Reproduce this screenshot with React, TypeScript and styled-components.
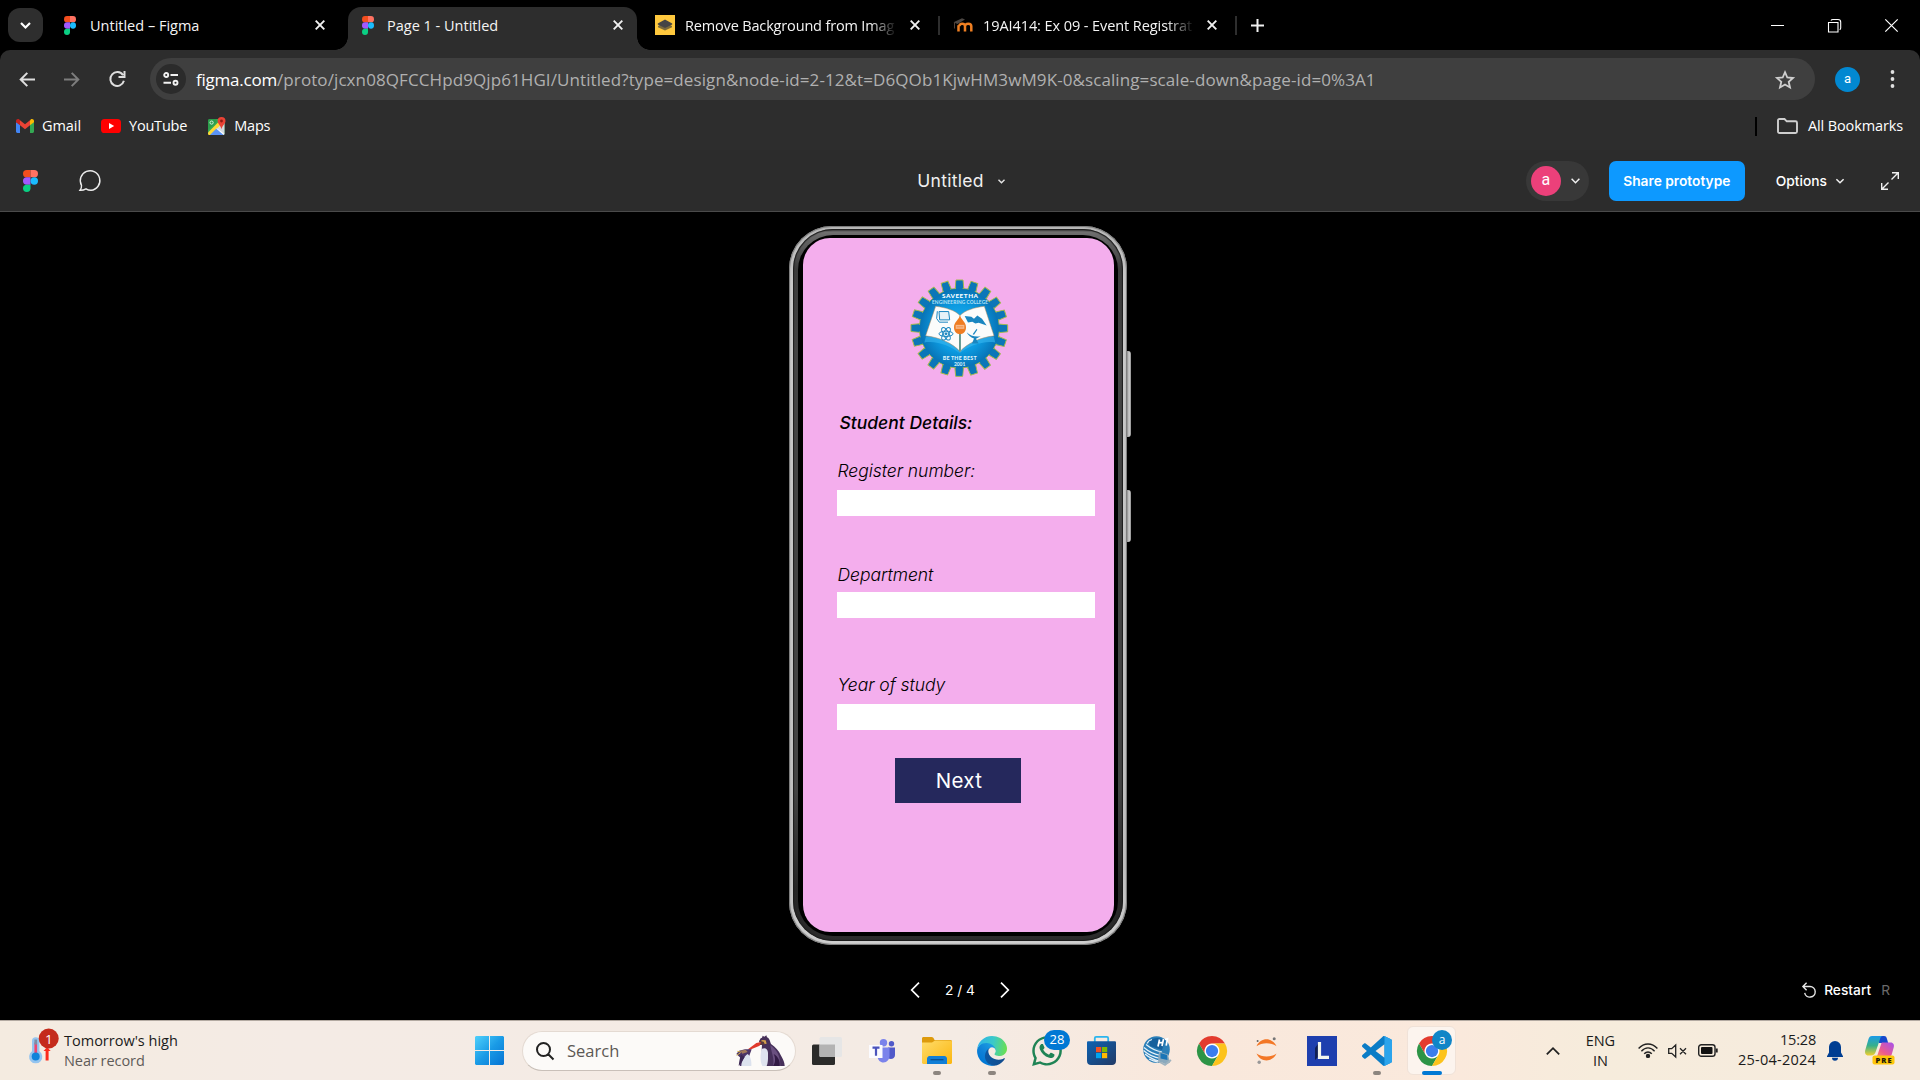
import React from "react";
import styled, { createGlobalStyle } from "styled-components";
import { FaWhatsapp } from "react-icons/fa";

const ui = `"Open Sans", "Noto Sans", sans-serif`;
const inter = `Inter, "Liberation Sans", sans-serif`;

const Global = createGlobalStyle`
  * { box-sizing: border-box; }
  body { margin: 0; background: #000; overflow: hidden; }
  svg { display: block; flex: none; overflow: visible; }
`;

const Window = styled.div`
  width: 1920px;
  height: 1080px;
  display: flex;
  flex-direction: column;
  background: #000;
  font-family: ${ui};
  color: #fff;
`;

/* ---------- Tab strip ---------- */

const TabStrip = styled.div`
  height: 50px;
  flex: none;
  display: flex;
  align-items: center;
  padding-left: 8px;
`;

const TabSearch = styled.div`
  width: 35px;
  height: 34px;
  border-radius: 12px;
  background: #2e2e2e;
  display: flex;
  align-items: center;
  justify-content: center;
  margin-right: 9px;
`;

const Tab = styled.div<{ $width: number; $start: number; $end: number; $gap: number }>`
  width: ${(p) => p.$width}px;
  height: 36px;
  display: flex;
  align-items: center;
  justify-content: space-between;
  gap: ${(p) => p.$gap}px;
  padding: 0 ${(p) => p.$end}px 0 ${(p) => p.$start}px;
`;

const ActiveTab = styled(Tab)`
  position: relative;
  align-self: flex-end;
  height: 43px;
  padding-bottom: 7px;
  background: #2d2d2d;
  border-radius: 13px 13px 0 0;
  &::before,
  &::after {
    content: "";
    position: absolute;
    bottom: 0;
    width: 13px;
    height: 13px;
  }
  &::before {
    left: -13px;
    background: radial-gradient(circle at 0 0, transparent 12.5px, #2d2d2d 13px);
  }
  &::after {
    right: -13px;
    background: radial-gradient(circle at 100% 0, transparent 12.5px, #2d2d2d 13px);
  }
`;

const TabTitle = styled.span<{ $spacing?: number; $fade?: boolean }>`
  flex: 1;
  overflow: hidden;
  white-space: nowrap;
  font-size: 14.5px;
  line-height: 22px;
  padding-top: 1px;
  letter-spacing: ${(p) => p.$spacing ?? 0}px;
  color: #f4f4f4;
  margin-right: ${(p) => (p.$fade ? 5 : 0)}px;
  ${(p) => p.$fade && "mask-image: linear-gradient(to right, #000 88%, transparent 101%);"}
`;

const TabDivider = styled.div`
  width: 2px;
  height: 19px;
  background: #2e2e2e;
`;

const NewTab = styled.div`
  margin-left: 14px;
`;

const WindowButtons = styled.div`
  margin-left: auto;
  display: flex;
  align-items: center;
  gap: 44px;
  padding-right: 22px;
`;

/* ---------- Navigation and bookmarks ---------- */

const ChromeBars = styled.div`
  height: 100px;
  flex: none;
  background: #2d2d2d;
  border-radius: 10px 10px 0 0;
`;

const NavBar = styled.div`
  height: 58px;
  display: flex;
  align-items: center;
  padding-left: 19px;
`;

const NavButtons = styled.div`
  display: flex;
  align-items: center;
  gap: 29px;
  width: 131px;
`;

const AddressBar = styled.div`
  width: 1665px;
  height: 42px;
  border-radius: 21px;
  background: #3f3f3f;
  display: flex;
  align-items: center;
  padding: 0 20px 0 6px;
`;

const SiteInfo = styled.div`
  width: 30px;
  height: 30px;
  border-radius: 50%;
  background: #2b2b2b;
  display: flex;
  align-items: center;
  justify-content: center;
`;

const Url = styled.div`
  flex: 1;
  margin-left: 10px;
  padding-top: 1px;
  font-size: 17px;
  line-height: 26px;
  letter-spacing: 0.092px;
  color: #b0b0b0;
  white-space: nowrap;
`;

const Host = styled.span`
  color: #fff;
  letter-spacing: -0.22px;
`;

const Avatar = styled.div<{ $size: number; $color: string; $font: number }>`
  width: ${(p) => p.$size}px;
  height: ${(p) => p.$size}px;
  border-radius: 50%;
  background: ${(p) => p.$color};
  display: flex;
  align-items: center;
  justify-content: center;
  font-family: Roboto, ${ui};
  font-size: ${(p) => p.$font}px;
  line-height: 1;
  color: #fff;
  padding-bottom: 2px;
`;

const ProfileArea = styled.div`
  display: flex;
  align-items: center;
  gap: 30px;
  margin-left: 20px;
`;

const BookmarkBar = styled.div`
  height: 36px;
  display: flex;
  align-items: center;
  padding: 0 17px 0 16px;
`;

const Bookmark = styled.div<{ $gap: number; $after?: number; $spacing?: number }>`
  display: flex;
  align-items: center;
  gap: ${(p) => p.$gap}px;
  margin-right: ${(p) => p.$after ?? 0}px;
  font-size: 14.5px;
  line-height: 22px;
  letter-spacing: ${(p) => p.$spacing ?? -0.2}px;
  color: #fff;
  white-space: nowrap;
`;

const BookmarkDivider = styled.div`
  width: 2px;
  height: 19px;
  background: #000;
  margin: 0 20px 0 auto;
`;

/* ---------- Prototype toolbar ---------- */

const ProtoBar = styled.div`
  height: 62px;
  flex: none;
  display: grid;
  grid-template-columns: 1fr auto 1fr;
  align-items: center;
  background: #2c2c2c;
  border-bottom: 1px solid #4a4a4a;
  font-family: ${inter};
`;

const BarStart = styled.div`
  display: flex;
  align-items: center;
  gap: 41px;
  padding-left: 23px;
`;

const FileName = styled.div`
  display: flex;
  align-items: center;
  gap: 14px;
  padding: 1px 0 0 2px;
  font-size: 17.5px;
  letter-spacing: 0.3px;
  line-height: 24px;
  color: #f0f0f0;
`;

const BarEnd = styled.div`
  display: flex;
  align-items: center;
  justify-content: flex-end;
  padding-right: 21px;
`;

const ViewerPill = styled.div`
  width: 63px;
  height: 40px;
  border-radius: 20px;
  background: #383838;
  display: flex;
  align-items: center;
  gap: 10px;
  padding-left: 5px;
`;

const ShareButton = styled.div`
  width: 136px;
  height: 40px;
  margin-left: 20px;
  border-radius: 7px;
  background: #0d99ff;
  display: flex;
  align-items: center;
  justify-content: center;
  font-size: 13.75px;
  font-weight: 600;
  color: #fff;
`;

const OptionsButton = styled.div`
  display: flex;
  align-items: center;
  gap: 9px;
  margin: 0 37px 0 31px;
  font-size: 13.75px;
  font-weight: 500;
  color: #fff;
`;

/* ---------- Stage and phone ---------- */

const Stage = styled.main`
  height: 808px;
  flex: none;
  display: flex;
  flex-direction: column;
  background: #000;
  font-family: ${inter};
`;

const PhoneArea = styled.div`
  height: 733px;
  display: flex;
  padding: 14px 0 0 789px;
`;

const Phone = styled.div`
  width: 338px;
  height: 719px;
  border-radius: 43px;
  padding: 2.5px 4px 4px;
  background: linear-gradient(180deg, #b9b9b9 0, #c9c9c9 60px, #bfbfbf 640px, #cfcfcf 719px);
  box-shadow: inset 0 0 1px 1px #777;
`;

const Bezel = styled.div`
  height: 100%;
  border-radius: 40px;
  padding: 6px 5px 5px;
  background: linear-gradient(180deg, #2a2a2a 0, #707070 3px, #6a6a6a 6px, #3b3b3b 40px, #444 120px, #444 560px, #262626 660px, #2c2c2c 100%);
  box-shadow: inset 0 0 1px 1px #1c1c1c;
`;

const Glass = styled.div`
  height: 100%;
  border-radius: 35px;
  padding: 3.5px 4.5px;
  background: #000;
`;

const Keys = styled.div`
  width: 4px;
  display: flex;
  flex-direction: column;
  gap: 53px;
  padding-top: 125px;
`;

const Key = styled.div<{ $height: number }>`
  width: 3.5px;
  height: ${(p) => p.$height}px;
  border-radius: 0 3px 3px 0;
  background: linear-gradient(90deg, #8a8a8a, #d4d4d4 55%, #8c8c8c);
`;

const Screen = styled.div`
  height: 694px;
  border-radius: 27px;
  background: #f4aeed;
  color: #000;
  padding: 42px 19px 0 34px;
  display: flex;
  flex-direction: column;
  align-items: flex-start;
`;

const Crest = styled.div`
  width: 98px;
  height: 96px;
  margin-left: 73px;
`;

const Heading = styled.div`
  margin: 35px 0 0 3px;
  font-size: 17.5px;
  line-height: 24px;
  font-weight: 500;
  font-style: italic;
`;

const FieldLabel = styled.label<{ $top: number; $bottom: number }>`
  margin: ${(p) => p.$top}px 0 ${(p) => p.$bottom}px 1px;
  font-size: 17.5px;
  line-height: 24px;
  font-weight: 300;
  font-style: italic;
  letter-spacing: -0.04px;
  white-space: nowrap;
`;

const Field = styled.div`
  width: 258px;
  height: 26px;
  background: #fff;
`;

const NextButton = styled.div`
  width: 126px;
  height: 45px;
  margin: 28px 0 0 58px;
  background: #25285c;
  display: flex;
  align-items: center;
  justify-content: center;
  padding-left: 3px;
  font-size: 20.5px;
  font-weight: 400;
  letter-spacing: 0.3px;
  color: #fff;
`;

const PagerRow = styled.div`
  flex: 1;
  display: grid;
  grid-template-columns: 1fr auto 1fr;
  align-items: center;
  padding-top: 14px;
  font-size: 13.75px;
`;

const Pager = styled.div`
  grid-column: 2;
  display: flex;
  align-items: center;
  gap: 25px;
`;

const Restart = styled.div`
  display: flex;
  align-items: center;
  justify-content: flex-end;
  gap: 8px;
  padding-right: 30px;
  font-weight: 500;
`;

const Shortcut = styled.span`
  color: #6a6a6a;
  font-weight: 400;
  margin-left: 2px;
`;

/* ---------- Taskbar ---------- */

const Taskbar = styled.footer`
  height: 60px;
  flex: none;
  display: flex;
  align-items: center;
  border-top: 1px solid #b3aaa2;
  background: linear-gradient(90deg, #f4ebe0 0, #f4ebe5 15%, #f4ebe4 50%, #f9e8dc 62%, #fae9dc 76%, #f6ecdc 83%, #f6ebde 100%);
  color: #1b1b1b;
  font-size: 14.5px;
`;

const Weather = styled.div`
  width: 475px;
  display: flex;
  align-items: center;
  padding-left: 28px;
`;

const WeatherIcon = styled.div`
  width: 36px;
  height: 38px;
`;

const TwoLines = styled.div<{ $align: string }>`
  display: flex;
  flex-direction: column;
  text-align: ${(p) => p.$align};
  line-height: 20px;
  white-space: nowrap;
`;

const Line = styled.span<{ $spacing?: number; $muted?: boolean }>`
  letter-spacing: ${(p) => p.$spacing ?? 0}px;
  color: ${(p) => (p.$muted ? "#5f5b58" : "#1b1b1b")};
`;

const SearchPill = styled.div`
  width: 274px;
  height: 40px;
  margin: 0 3px 0 18px;
  border-radius: 20px;
  background: #fcfaf8;
  border: 1px solid #e4dad2;
  border-bottom-color: #c9c0b9;
  display: flex;
  align-items: center;
  padding: 0 10px 0 13px;
  font-size: 16.5px;
  color: #5c5854;
`;

const SearchText = styled.span`
  flex: 1;
  margin-left: 13px;
`;

const Slot = styled.div`
  position: relative;
  width: 55px;
  height: 50px;
  display: flex;
  align-items: center;
  justify-content: center;
`;

const SlotCard = styled.div`
  width: 49px;
  height: 49px;
  border-radius: 6px;
  background: #fcf4ee;
  border: 1px solid #f0e2d8;
  display: flex;
  align-items: center;
  justify-content: center;
`;

const Running = styled.span<{ $active?: boolean }>`
  position: absolute;
  bottom: 1px;
  left: 50%;
  width: ${(p) => (p.$active ? 20 : 8)}px;
  height: 4px;
  margin-left: ${(p) => (p.$active ? -10 : -4)}px;
  border-radius: 2px;
  background: ${(p) => (p.$active ? "#0078d4" : "#8c857f")};
`;

const SlotBadge = styled.span<{ $width: number; $color: string; $font: number }>`
  position: absolute;
  top: 4px;
  left: ${(p) => (p.$width > 20 ? 25 : 28)}px;
  width: ${(p) => p.$width}px;
  height: 20px;
  border-radius: 10px;
  background: ${(p) => p.$color};
  color: #fff;
  font-size: ${(p) => p.$font}px;
  line-height: 19px;
  text-align: center;
`;

const Letter = styled.div`
  width: 30px;
  height: 30px;
  background: #1e3fae;
  display: flex;
  align-items: center;
  justify-content: center;
`;

const Tray = styled.div`
  margin-left: auto;
  display: flex;
  align-items: center;
  padding-right: 25px;
`;

const TrayItem = styled.div<{ $before: number; $up?: number }>`
  margin-left: ${(p) => p.$before}px;
  padding-bottom: ${(p) => p.$up ?? 0}px;
`;

/* ---------- Icons ---------- */

const FigmaMark = ({ w, h }: { w: number; h: number }) => (
  <svg width={w} height={h} viewBox="0 0 20 30" preserveAspectRatio="none">
    <path d="M5 0h5v10H5A5 5 0 0 1 5 0z" fill="#f24e1e" />
    <path d="M10 0h5a5 5 0 0 1 0 10h-5z" fill="#ff7262" />
    <path d="M5 10h5v10H5a5 5 0 0 1 0-10z" fill="#a259ff" />
    <circle cx="15" cy="15" r="5" fill="#1abcfe" />
    <path d="M5 20h5v5a5 5 0 1 1-5-5z" fill="#0acf83" />
  </svg>
);

const Stroke = ({ d, w, h, c = "#e6e6e6", s = 1.5 }: { d: string; w: number; h: number; c?: string; s?: number }) => (
  <svg width={w} height={h} viewBox={`0 0 ${w} ${h}`} fill="none" stroke={c} strokeWidth={s}>
    <path d={d} />
  </svg>
);

const Cross = () => <Stroke w={10} h={10} d="M.7.7l8.6 8.6M9.3.7L.7 9.3" s={1.9} c="#f1f1f1" />;

const Layers = () => (
  <svg width="20" height="20" viewBox="0 0 20 20">
    <path d="M0 0h20v20H0z" fill="#ffc83d" />
    <path d="M3 11l7-3.6 7 3.6v1.2l-7 3.4-7-3.4z" fill="#7b6a3b" />
    <path d="M10 4.6l7.2 3.8v1L10 13 2.8 9.4v-1z" fill="#454545" />
  </svg>
);

const Moodle = () => (
  <svg width="20" height="16" viewBox="0 0 20 16" fill="none">
    <path d="M5.500 14.500V8.200M12 14.500V9.200c0-3.400-5.400-3.400-5.700 0M18.300 14.500V9.200c0-3.400-6-3.400-6.300 0v5.300" stroke="#ef7f22" strokeWidth="2.500" />
    <path d="M.5 5.200L9 1.200l3 1.400-7.500 4.300z" fill="#4b4643" />
    <path d="M1.500 5.500v6" stroke="#5b4a3e" strokeWidth=".9" />
  </svg>
);

const Gmail = () => (
  <svg width="18" height="14" viewBox="0 0 18 14">
    <path d="M0 3v9.6C0 13.400.6 14 1.300 14H4V5.600z" fill="#4285f4" />
    <path d="M14 5.600V14h2.700c.7 0 1.300-.6 1.300-1.400V3z" fill="#34a853" />
    <path d="M14 1.600v4.700l4-3V2c0-1.900-2.100-2.500-3.300-1.500z" fill="#fbbc04" />
    <path d="M4 6.300V1.300l5 3.900 5-3.900v5L9 10.200z" fill="#ea4335" />
    <path d="M0 2v1.300l4 3V1.300L3.300.500C2-.5 0 .2 0 2z" fill="#c5221f" />
  </svg>
);

const YouTube = () => (
  <svg width="20" height="14" viewBox="0 0 20 14">
    <rect width="20" height="14" rx="3.600" fill="#f00" />
    <path d="M8 4l5.200 3L8 10z" fill="#fff" />
  </svg>
);

const Maps = () => (
  <svg width="18" height="18" viewBox="0 0 18 18">
    <rect x="0" y="2" width="16.500" height="16" rx="2" fill="#34a853" />
    <path d="M7 10.500l9.500 7V6L12 4z" fill="#d5dade" />
    <path d="M1.500 18L9 10.800 16 18z" fill="#4285f4" />
    <path d="M0 15.500L10.500 5l2.600 2.600L2.500 18H1.200C.4 18 0 17.300 0 16.500z" fill="#fdd835" />
    <path d="M2 18l6.500-6.500L15 18z" fill="#5b93f5" />
    <path d="M0 4v9L8.500 5V2H2C.8 2 0 2.800 0 4z" fill="#2c9d4b" />
    <path d="M9 11l-.6.700L15.500 18l1-1z" fill="#fff" />
    <circle cx="3.600" cy="5.600" r="1.600" fill="none" stroke="#e8f5e9" strokeWidth=".9" />
    <path d="M13.500 0A4 4 0 0 0 9.600 4c0 3 3.200 4.200 3.900 8.300.7-4.100 4-5.300 4-8.300a4 4 0 0 0-4-4z" fill="#ea4335" />
    <circle cx="13.500" cy="4" r="1.400" fill="#8e1c14" />
  </svg>
);

const teeth = Array.from({ length: 20 }, (_, i) => i * 18);

const CollegeCrest = () => (
  <svg width="98" height="96" viewBox="30 29 294 289" preserveAspectRatio="none">
    <defs>
      <radialGradient id="disc">
        <stop offset="0" stopColor="#27b4f0" />
        <stop offset=".6" stopColor="#0c9ae0" />
        <stop offset="1" stopColor="#0873b6" />
      </radialGradient>
    </defs>
    <g stroke="#a3b94c" strokeWidth="3">
      {teeth.map((a) => (
        <path key={a} d="M165 62l3-33h21l3 33z" fill="#0b76b8" transform={`rotate(${a} 178 174)`} />
      ))}
      <circle cx="178" cy="174" r="120" fill="#0b76b8" />
    </g>
    {teeth.map((a) => (
      <path key={a} d="M167.500 66l2-34h17l2 34z" fill="#0b76b8" transform={`rotate(${a} 178 174)`} />
    ))}
    <circle cx="178" cy="174" r="118.500" fill="url(#disc)" />
    <path d="M73 217l5-18c40-5 78 18 101 48 23-30 62-53 102-48l5 18c-40-6-80 12-107 32-27-20-66-38-106-32z" fill="#38b7f0" opacity=".6" />
    <g fill="#fbfcfb" stroke="#b98a5c" strokeWidth="1.500">
      <path d="M107 108c30 4 58 12 73 28v108c-22-24-60-42-103-47z" />
      <path d="M253 108c-30 4-58 12-73 28v108c22-24 60-42 102-47z" />
    </g>
    <path d="M180 190v52" stroke="#2a7d78" strokeWidth="4" />
    <path d="M180 136c3 12 18 20 18 35 0 28-36 28-36 0 0-15 15-23 18-35z" fill="#ef7d22" />
    <path d="M167 164h26v12h-26z" fill="#f7b98b" />
    <path d="M170 170h20" stroke="#ef7d22" strokeWidth="2" />
    <g fill="none" stroke="#1a86c0" strokeWidth="3">
      <path d="M117 124h29l3 25h-30z" fill="#e6f2f8" />
      <path d="M112 123l-2 22 8 11h26" />
      <ellipse cx="138" cy="191" rx="21" ry="8" />
      <ellipse cx="138" cy="191" rx="21" ry="8" transform="rotate(60 138 191)" />
      <ellipse cx="138" cy="191" rx="21" ry="8" transform="rotate(120 138 191)" />
      <circle cx="138" cy="191" r="3" fill="#1a86c0" />
    </g>
    <g fill="#1a86c0">
      <path d="M194 137l20 3 8 6 10-10 14 10 14 20-24-8-10 2-9-5-13 2z" />
      <path d="M200 186c10 10 26 16 42 12l-14 8 8 14h-20l6-15c-10-4-18-10-22-19z" />
      <path d="M218 192l12-16 2 3-10 15z" />
    </g>
    <g fill="#fff" fontFamily="Lato, sans-serif" textAnchor="middle">
      <text x="180" y="82" fontSize="19" fontWeight="900" textLength="108">SAVEETHA</text>
      <text x="180" y="102" fontSize="14.500" fontWeight="700" fill="#b5e3f8" textLength="168">ENGINEERING COLLEGE</text>
      <text x="179" y="271" fontSize="16" fontWeight="900" fill="#dff3fc" textLength="102">BE THE BEST</text>
      <text x="179" y="289" fontSize="15" fontWeight="900" fill="#c9ebfa" textLength="34">2001</text>
    </g>
  </svg>
);

const Thermometer = () => (
  <svg width="36" height="38" viewBox="0 3.500 36 38">
    <path d="M4 12.500a3.700 3.700 0 0 1 7.400 0v10.300a6.600 6.600 0 1 1-7.400 0z" fill="#94c4ef" />
    <path d="M6.400 14h2.700v14H6.400z" fill="#f0456e" />
    <path d="M6.400 11h2.700v5H6.400z" fill="#7c8ea6" />
    <circle cx="7.700" cy="28" r="4" fill="#1083da" />
    <path d="M17.600 20h3v12h-3z" fill="#fb2a1c" />
    <path d="M15.500 22.500l3.600-3.500 3.600 3.500z" fill="#fb2a1c" />
    <circle cx="20.700" cy="10" r="10" fill="#c42b1c" />
    <text x="20.900" y="15" fontSize="13.500" fill="#fff" textAnchor="middle" fontFamily="Open Sans, sans-serif">1</text>
  </svg>
);

const WindowsLogo = () => (
  <svg width="29" height="29" viewBox="0 0 29 29">
    <defs>
      <linearGradient id="win" x1="0" y1="0" x2="29" y2="29" gradientUnits="userSpaceOnUse">
        <stop offset="0" stopColor="#4fd0fb" />
        <stop offset=".5" stopColor="#1a9be6" />
        <stop offset="1" stopColor="#0673d3" />
      </linearGradient>
    </defs>
    <path d="M1 0h13v14H0V1zM15 0h13l1 1v13H15zM0 15h14v14H1l-1-1zM15 15h14v13l-1 1H15z" fill="url(#win)" />
  </svg>
);

const Penguins = () => (
  <svg width="49" height="32" viewBox="827 77 147 96">
    <path d="M896 96l5-9 4-2 2-6 5 3 6-4 2 6c9 4 9 14 12 20 14 10 24 20 29 33 8 14 12 22 12 33h-62c-6-8-2-20-5-28-2-14-2-24-1-34z" fill="#46305a" />
    <path d="M930 108c18 12 30 30 30 62h-22c6-20-6-44-8-62z" fill="#6a5080" />
    <path d="M905 118c10-4 17 0 18 12 0 14 1 28-4 40h-13c-8-16-6-38-1-52z" fill="#dfe3ef" />
    <path d="M940 134c14 8 20 22 18 36h-20c8-10 8-24 2-36z" fill="#321b45" />
    <path d="M897 95l14-4 8 6-6 9-14 1z" fill="#5a3a3c" />
    <path d="M904 92l12 1 3 10-6 1-3-7-7-1z" fill="#d3a04d" />
    <path d="M902 98l-4 11-33 14-1-4 24-18z" fill="#e0392c" />
    <path d="M828 134l8-10 18-4 20 0-6 16-6 17-14 17h-10l3-24z" fill="#4c3567" />
    <path d="M840 124l16-3 6 7-16 5z" fill="#a37a5a" />
    <path d="M829 138l12-8M831 126l10 2" stroke="#d7b24d" strokeWidth="3" />
    <path d="M862 134c9 8 12 22 11 36h-30c0-14 8-28 19-36z" fill="#dce2ee" />
    <path d="M842 136c-4 10-5 20-7 33 8-6 12-16 18-26z" fill="#3b2753" />
  </svg>
);

const TaskView = () => (
  <svg width="30" height="28" viewBox="0 0 30 28">
    <rect x="0" y="7.500" width="23" height="20.500" rx="1.500" fill="#2b2b2a" />
    <rect x="7.500" y="0" width="22.500" height="20" rx="1.500" fill="#e6e6e6" />
    <path d="M7.500 7.500H23V20H8.500a1 1 0 0 1-1-1z" fill="#b3b3b3" />
  </svg>
);

const Teams = () => (
  <svg width="26" height="24" viewBox="0 0 26 24">
    <circle cx="14.500" cy="3.700" r="3.700" fill="#7b83eb" />
    <circle cx="22.500" cy="4.700" r="2.700" fill="#5059c9" />
    <path d="M19 8.500h7v7.500c0 3.600-4 5-7 3.200z" fill="#5059c9" />
    <path d="M9 8.500h11.500v8c0 4-2.600 7-6 7S9 21 8.600 18z" fill="#7b83eb" />
    <path d="M0 6h13.500v13H0z" fill="#fbfbff" />
    <path d="M3.500 8.700h7M7 8.700v8" stroke="#4b53bc" strokeWidth="2.200" fill="none" />
  </svg>
);

const Explorer = () => (
  <svg width="30" height="27" viewBox="0 0 30 27">
    <defs>
      <linearGradient id="folder" x1="0" y1="0" x2="1" y2="1">
        <stop offset="0" stopColor="#ffdc6a" />
        <stop offset="1" stopColor="#fbb60f" />
      </linearGradient>
    </defs>
    <path d="M0 1.500C0 .6.600 0 1.500 0h8c1.600 0 2.300 1.300 3 3H29l1 1v3H0z" fill="#dd9a0c" />
    <path d="M0 5.500h10l3-2h16l1 1V26l-1 1H1l-1-1z" fill="url(#folder)" />
    <path d="M5 27v-5c0-1.600 1-3 2.600-3h14.800c1.600 0 2.600 1.400 2.600 3v5z" fill="#117ed6" />
    <path d="M8.500 22.700h13" stroke="#0b4f8f" strokeWidth="1.300" />
  </svg>
);

const Edge = () => (
  <svg width="30" height="30" viewBox="0 0 256 256">
    <defs>
      <linearGradient id="e1" x1="60" y1="177" x2="241" y2="177" gradientUnits="userSpaceOnUse">
        <stop offset="0" stopColor="#0c59a4" />
        <stop offset="1" stopColor="#114a8b" />
      </linearGradient>
      <linearGradient id="e2" x1="157" y1="100" x2="46" y2="221" gradientUnits="userSpaceOnUse">
        <stop offset="0" stopColor="#1b9de2" />
        <stop offset=".6" stopColor="#0f80d7" />
        <stop offset="1" stopColor="#0078d4" />
      </linearGradient>
      <linearGradient id="e3" x1="10" y1="60" x2="256" y2="110" gradientUnits="userSpaceOnUse">
        <stop offset="0" stopColor="#2fb5e8" />
        <stop offset=".5" stopColor="#3bc9c8" />
        <stop offset="1" stopColor="#6ce04e" />
      </linearGradient>
    </defs>
    <path fill="url(#e1)" d="M231.100 190.500c-3.400 1.800-6.900 3.400-10.500 4.700a101.500 101.500 0 0 1-35.800 6.400c-47.200 0-88.300-32.500-88.300-74.100a31.500 31.500 0 0 1 16.400-27.300c-42.700 1.800-53.700 46.300-53.700 72.400 0 73.900 68.100 81.400 82.800 81.400 7.900 0 19.800-2.300 27-4.600l1.300-.4a128.300 128.300 0 0 0 66.600-52.800 4 4 0 0 0-5.800-5.700z" />
    <path fill="url(#e2)" d="M105.700 241.400a79.200 79.200 0 0 1-22.700-21.300 80.700 80.700 0 0 1 29.900-120c3.100-1.500 8.500-4.100 15.600-4a32.400 32.400 0 0 1 25.700 13 31.900 31.900 0 0 1 6.300 18.700c0-.2 24.500-79.600-80-79.600-43.900 0-80 41.600-80 78.200 0 23.300 5.400 39.200 12.100 54.500a128 128 0 0 0 156.400 67 75.500 75.500 0 0 1-62.800-8z" />
    <path fill="url(#e3)" d="M152.300 148.900c-.8 1-3.300 2.500-3.300 5.700 0 2.600 1.700 5.100 4.700 7.300 14.400 10 41.500 8.700 41.500 8.700a59.600 59.600 0 0 0 30.300-8.400 61.400 61.400 0 0 0 30.500-53c.3-22.400-8-37.300-11.300-43.900C223.600 23.900 177.700 0 128 0A128 128 0 0 0 0 126.200c.5-36.500 36.800-66 80-66 3.500 0 23.500.3 42 10.100 16.300 8.600 24.900 18.900 30.800 29.200 6.200 10.700 7.300 24.100 7.300 29.500s-2.700 13.300-7.800 19.900z" />
  </svg>
);

const Store = () => (
  <svg width="29" height="29" viewBox="0 0 29 29">
    <defs>
      <linearGradient id="bag" x1="0" y1="0" x2="1" y2="1">
        <stop offset="0" stopColor="#0c62b2" />
        <stop offset="1" stopColor="#223a66" />
      </linearGradient>
    </defs>
    <path d="M7.800 6V2.200c0-.8.500-1.300 1.300-1.300h10.800c.8 0 1.300.5 1.300 1.300V6" fill="none" stroke="#2bb5ee" strokeWidth="1.800" />
    <path d="M0 6.500c0-.8.500-1.300 1.300-1.300h26.400c.8 0 1.300.5 1.300 1.300V25c0 2.400-1.600 4-4 4H4c-2.400 0-4-1.600-4-4z" fill="url(#bag)" />
    <path d="M9 11h5.200v5.200H9z" fill="#f25022" />
    <path d="M15 11h5.200v5.200H15z" fill="#7fba00" />
    <path d="M9 17h5.200v5.200H9z" fill="#00a4ef" />
    <path d="M15 17h5.200v5.200H15z" fill="#ffb900" />
  </svg>
);

const Globe = () => (
  <svg width="28" height="29" viewBox="0 0 28 29">
    <circle cx="13.500" cy="13.500" r="13.300" fill="#2b7fb8" />
    <path d="M6 5C11 1 18 1 22 5l-3 9-12-4z" fill="#15609c" />
    <g fill="none" stroke="#e9f3f9" strokeWidth="1.200">
      <path d="M3 8.500c5 4 10 6.500 16 7.500M1 11.500c5 4.500 11 7 17 8M.6 14.500c5 4.500 10 7 17 8M2 18c4 3.500 8 5.500 14 7M6 23c3 1.500 6 2.500 9 3" />
      <path d="M9 3.500C7 4 5 5.500 4 7.500" />
    </g>
    <path d="M16 15.500l9 3 2 8-4 2-8-4z" fill="#8aa9bd" />
    <path d="M17.500 17l6.500 2 .5 5-7-1.500z" fill="#1a75b6" />
    <path d="M15 25l7 4 6-5" stroke="#9fb3bf" strokeWidth="1.800" fill="none" />
    <path d="M16.500 3.500l-1.500 7M20.500 3l-1.500 7M16 6.700h4M22 3.500l2.500-.8-1.300 7" stroke="#fff" strokeWidth="1.700" fill="none" />
  </svg>
);

const Chrome = () => (
  <svg width="30" height="30" viewBox="0 0 48 48">
    <circle cx="24" cy="24" r="12.500" fill="#fff" />
    <path d="M24 12h20.785A24 24 0 0 0 3.215 12l10.392 18A12 12 0 0 1 24 12z" fill="#e33b2e" />
    <path d="M13.607 30L3.215 12A24 24 0 0 0 24 48l10.392-18a12 12 0 0 1-20.785 0z" fill="#2d9446" />
    <path d="M34.392 30L24 48a24 24 0 0 0 20.785-36H24a12 12 0 0 1 10.392 18z" fill="#fcc31c" />
    <circle cx="24" cy="24" r="9.800" fill="#3b7ded" />
  </svg>
);

const Jupyter = () => (
  <svg width="21" height="27" viewBox="0 0 21 27">
    <path d="M.5 9.200C4.500 0 16.500 0 20.500 9.200 15 5.300 6 5.300.500 9.200z" fill="#f37726" />
    <path d="M.5 16.500c4 9.200 16 9.200 20 0-5.500 3.900-14.500 3.900-20 0z" fill="#f37726" />
    <circle cx="18.200" cy="1.800" r="1.500" fill="#767677" />
    <circle cx="1.600" cy="4" r="1" fill="#616262" />
    <circle cx="3.200" cy="25.300" r="1.700" fill="#989798" />
  </svg>
);

const VSCode = () => (
  <svg width="30" height="30" viewBox="0 0 100 100">
    <path
      fill="#0b7cc6"
      fillRule="evenodd"
      d="M70.900 99.300c1.600.6 3.400.6 5-.2l20.600-9.900c2.100-1 3.500-3.200 3.500-5.600V16.400c0-2.400-1.400-4.600-3.500-5.600L75.900.9c-2.100-1-4.600-.8-6.400.5-.3.200-.5.400-.7.700L29.400 38 12.200 25c-1.600-1.200-3.800-1.100-5.300.2l-5.500 5c-1.800 1.700-1.800 4.500 0 6.200L16.200 50 1.400 63.600c-1.800 1.600-1.800 4.500 0 6.100l5.500 5c1.500 1.400 3.700 1.500 5.300.3l17.200-13 39.400 35.900c.6.600 1.300 1.100 2.100 1.400zM75 27.300L45.100 50 75 72.700z"
    />
    <path fill="#2ba4ec" d="M75.900.9c-1.500-.7-3.200-.8-4.700-.2 2.200.1 3.800 1.900 3.800 4.100v90.300c0 2.300-1.700 4.100-3.900 4.200 1.500.6 3.300.5 4.800-.2l20.600-9.900c2.100-1 3.500-3.200 3.500-5.600V16.400c0-2.400-1.400-4.600-3.500-5.600z" />
  </svg>
);

const Copilot = () => (
  <svg width="30" height="29" viewBox="0 0 30 29">
    <defs>
      <linearGradient id="c1" x1="0" y1="0" x2="0" y2="1">
        <stop offset="0" stopColor="#1b9be8" />
        <stop offset=".5" stopColor="#37b08a" />
        <stop offset="1" stopColor="#f2cf2c" />
      </linearGradient>
      <linearGradient id="c2" x1="1" y1="0" x2="0" y2="1">
        <stop offset="0" stopColor="#a451ee" />
        <stop offset=".6" stopColor="#ee5b8c" />
        <stop offset="1" stopColor="#f9a15b" />
      </linearGradient>
    </defs>
    <path d="M14 0h5c2 0 2.500 1.300 3 3l1.200 4H14z" fill="#1648cc" />
    <path d="M7 0h11c-2 0-2.500 1.500-3.100 3.500l-4.100 12C10 18 8.500 19.500 6 19.500H3.500C.5 19.500-.5 17 .3 14L3.500 3C4.200 1 5 0 7 0z" fill="url(#c1)" />
    <path d="M17 6.500h8.500c3 0 4 2.500 3.200 5l-2 7c-.6 2-1.700 3-3.700 3H9.500c2 0 2.700-1.500 3.300-3.500L16 8.500c.2-1 .5-1.500 1-2z" fill="url(#c2)" />
    <rect x="7.500" y="19.500" width="22" height="9" rx="2" fill="#fdc60b" />
    <text x="18.600" y="26.900" fontSize="7.500" fontWeight="800" fill="#201a08" textAnchor="middle" textLength="16" fontFamily="Open Sans, sans-serif">PRE</text>
  </svg>
);

/* ---------- Page ---------- */

const taskIcons: { icon: React.ReactNode; running?: boolean; badge?: string }[] = [
  { icon: <TaskView /> },
  { icon: <Teams /> },
  { icon: <Explorer />, running: true },
  { icon: <Edge />, running: true },
  { icon: <FaWhatsapp size={34} color="#1f8455" />, badge: "28" },
  { icon: <Store /> },
  { icon: <Globe /> },
  { icon: <Chrome /> },
  { icon: <Jupyter /> },
  {
    icon: (
      <Letter>
        <svg width="30" height="30" viewBox="0 0 30 30" fill="none">
          <path d="M8 24l3-3V8l-3 4z" fill="#0f1f55" />
          <path d="M12.500 6v15.300H22" stroke="#f3f6ee" strokeWidth="3.200" />
        </svg>
      </Letter>
    ),
  },
  { icon: <VSCode />, running: true },
];

const fields = [
  { label: "Register number:", top: 24, bottom: 7 },
  { label: "Department", top: 47, bottom: 5 },
  { label: "Year of study", top: 55, bottom: 7 },
];

export default function App() {
  return (
    <Window>
      <Global />
      <TabStrip>
        <TabSearch>
          <Stroke w={11} h={7} d="M1 1l4.500 4.500L10 1" s={2.200} c="#fff" />
        </TabSearch>
        <Tab $width={296} $start={12} $end={23} $gap={14}>
          <FigmaMark w={12} h={19} />
          <TabTitle>Untitled – Figma</TabTitle>
          <Cross />
        </Tab>
        <ActiveTab $width={289} $start={14} $end={14} $gap={13}>
          <FigmaMark w={12} h={19} />
          <TabTitle>Page 1 - Untitled</TabTitle>
          <Cross />
        </ActiveTab>
        <Tab $width={301} $start={18} $end={18} $gap={10}>
          <Layers />
          <TabTitle $fade $spacing={-0.16}>Remove Background from Imag</TabTitle>
          <Cross />
        </Tab>
        <TabDivider />
        <Tab $width={295} $start={13} $end={18} $gap={10}>
          <Moodle />
          <TabTitle $fade $spacing={-0.08}>19AI414: Ex 09 - Event Registrat</TabTitle>
          <Cross />
        </Tab>
        <TabDivider />
        <NewTab>
          <Stroke w={13} h={13} d="M6.500 0v13M0 6.500h13" s={2} c="#f1f1f1" />
        </NewTab>
        <WindowButtons>
          <Stroke w={13} h={13} d="M0 6.500h13" s={1} c="#fff" />
          <Stroke w={13} h={13} d="M.5 3.500h9.500v9.500H.5zM3 1.500C3.300.8 4 .5 5 .5h5c1.800 0 2.700.9 2.700 2.700V9c0 .8-.3 1.400-1 1.800" s={1.100} c="#fff" />
          <Stroke w={13} h={13} d="M.3.300l12.400 12.400M12.700.300L.3 12.700" s={1.200} c="#fff" />
        </WindowButtons>
      </TabStrip>

      <ChromeBars>
        <NavBar>
          <NavButtons>
            <Stroke w={16} h={15} d="M16 7.500H2M8.300.9L1.700 7.500l6.600 6.600" s={2} c="#dedede" />
            <Stroke w={16} h={15} d="M0 7.500h14M7.700.9l6.600 6.600-6.600 6.600" s={2} c="#7d7d7d" />
            <Stroke w={17} h={16} d="M14 4.200A6.900 6.900 0 1 0 14.900 9.800M15.500 0v6H9.500" s={2} c="#dedede" />
          </NavButtons>
          <AddressBar>
            <SiteInfo>
              <svg width="16" height="14" viewBox="0 0 16 14" fill="none" stroke="#f1f1f1" strokeWidth="1.900">
                <circle cx="3.200" cy="3" r="2" />
                <path d="M7.500 3H15M.5 10.800H8" />
                <circle cx="12.500" cy="10.800" r="2" />
              </svg>
            </SiteInfo>
            <Url>
              <Host>figma.com</Host>
              /proto/jcxn08QFCCHpd9Qjp61HGI/Untitled?type=design&amp;node-id=2-12&amp;t=D6QOb1KjwHM3wM9K-0&amp;scaling=scale-down&amp;page-id=0%3A1
            </Url>
            <svg width="20" height="19" viewBox="0 0 20 19" fill="none" stroke="#cfcfcf" strokeWidth="1.800">
              <path d="M10 2.200l2.300 5.300 5.700.5-4.300 3.800 1.300 5.700-5-3-5 3 1.300-5.700L2 8l5.700-.5z" />
            </svg>
          </AddressBar>
          <ProfileArea>
            <Avatar $size={25} $color="#0288d1" $font={13}>a</Avatar>
            <svg width="5" height="18" viewBox="0 0 5 18" fill="#e0e0e0">
              <circle cx="2.500" cy="2" r="1.900" />
              <circle cx="2.500" cy="9" r="1.900" />
              <circle cx="2.500" cy="16" r="1.900" />
            </svg>
          </ProfileArea>
        </NavBar>
        <BookmarkBar>
          <Bookmark $gap={8} $after={20} $spacing={-0.07}>
            <Gmail />
            Gmail
          </Bookmark>
          <Bookmark $gap={8} $after={21}>
            <YouTube />
            YouTube
          </Bookmark>
          <Bookmark $gap={8}>
            <Maps />
            Maps
          </Bookmark>
          <BookmarkDivider />
          <Bookmark $gap={10} $spacing={-0.12}>
            <Stroke w={21} h={16} d="M1 2.500C1 1.600 1.600 1 2.500 1h5l2.300 2.300h8.700c.9 0 1.500.6 1.500 1.500v8.700c0 .9-.6 1.500-1.500 1.500h-16C1.600 15 1 14.400 1 13.500z" s={1.900} c="#cfcfcf" />
            All Bookmarks
          </Bookmark>
        </BookmarkBar>
      </ChromeBars>

      <ProtoBar>
        <BarStart>
          <FigmaMark w={15} h={22} />
          <Stroke w={23} h={21} d="M1 20.300c1.300-1.700 1.700-3.200 1.500-5A9.800 9.800 0 1 1 12 20.300c-2 0-3.600-.5-5-1.400-1.800 1-3.800 1.500-6 1.400z" s={1.400} c="#ececec" />
        </BarStart>
        <FileName>
          Untitled
          <Stroke w={7} h={5} d="M.5.800l3 3 3-3" s={1.400} c="#e6e6e6" />
        </FileName>
        <BarEnd>
          <ViewerPill>
            <Avatar $size={30} $color="#ec407a" $font={16}>a</Avatar>
            <Stroke w={9} h={6} d="M.6.800l3.900 3.900L8.400.800" c="#f0f0f0" />
          </ViewerPill>
          <ShareButton>Share prototype</ShareButton>
          <OptionsButton>
            Options
            <Stroke w={8} h={6} d="M.4 1.200L4 4.800l3.600-3.600" c="#f0f0f0" />
          </OptionsButton>
          <Stroke w={18} h={18} d="M11 .7h6.300V7M17 1l-6.500 6.500M7 17.300H.7V11M1 17l6.500-6.500" s={1.400} c="#f0f0f0" />
        </BarEnd>
      </ProtoBar>

      <Stage>
        <PhoneArea>
          <Phone>
            <Bezel>
              <Glass>
                <Screen>
                  <Crest>
                    <CollegeCrest />
                  </Crest>
                  <Heading>Student Details:</Heading>
                  {fields.map((f) => (
                    <React.Fragment key={f.label}>
                      <FieldLabel $top={f.top} $bottom={f.bottom}>{f.label}</FieldLabel>
                      <Field />
                    </React.Fragment>
                  ))}
                  <NextButton>Next</NextButton>
                </Screen>
              </Glass>
            </Bezel>
          </Phone>
          <Keys>
            <Key $height={86} />
            <Key $height={52} />
          </Keys>
        </PhoneArea>
        <PagerRow>
          <Pager>
            <Stroke w={10} h={16} d="M9 .7L1.700 8 9 15.300" s={1.700} c="#fff" />
            2 / 4
            <Stroke w={10} h={16} d="M1 .7L8.300 8 1 15.300" s={1.700} c="#fff" />
          </Pager>
          <Restart>
            <Stroke w={14} h={16} d="M1 4.500h7a5.300 5.300 0 1 1-5.300 6.300M4.600.7L.9 4.500l3.700 3.800" s={1.400} c="#e8e8e8" />
            Restart
            <Shortcut>R</Shortcut>
          </Restart>
        </PagerRow>
      </Stage>

      <Taskbar>
        <Weather>
          <WeatherIcon>
            <Thermometer />
          </WeatherIcon>
          <TwoLines $align="left">
            <Line $spacing={0}>Tomorrow's high</Line>
            <Line $spacing={-0.05} $muted>Near record</Line>
          </TwoLines>
        </Weather>
        <WindowsLogo />
        <SearchPill>
          <Stroke w={18} h={18} d="M7.500 1a6.500 6.500 0 1 0 0 13 6.500 6.500 0 1 0 0-13M12 12l5.500 5.500" s={2} c="#222" />
          <SearchText>Search</SearchText>
          <Penguins />
        </SearchPill>
        {taskIcons.map((t, i) => (
          <Slot key={i}>
            {t.icon}
            {t.badge && <SlotBadge $width={26} $color="#0078d4" $font={13}>{t.badge}</SlotBadge>}
            {t.running && <Running />}
          </Slot>
        ))}
        <Slot>
          <SlotCard>
            <Chrome />
          </SlotCard>
          <SlotBadge $width={20} $color="#1085c7" $font={12}>a</SlotBadge>
          <Running $active />
        </Slot>
        <Tray>
          <Stroke w={14} h={8} d="M.8 7.300L7 1.200l6.200 6.100" s={1.800} c="#222" />
          <TrayItem $before={26}>
            <TwoLines $align="center">
              <Line $spacing={-0.1}>ENG</Line>
              <Line>IN</Line>
            </TwoLines>
          </TrayItem>
          <TrayItem $before={23}>
            <svg width="20" height="15" viewBox="0 0 20 15" fill="none" stroke="#222" strokeWidth="1.400">
              <path d="M.6 5.500C6-.6 14-.6 19.400 5.500M3.400 8.200c4-4.400 9.200-4.400 13.200 0M6.200 10.800c2.400-2.500 5.200-2.500 7.600 0" />
              <circle cx="10" cy="12.900" r="1.500" fill="#222" />
            </svg>
          </TrayItem>
          <TrayItem $before={10}>
            <Stroke w={19} h={14} d="M.7 4.700h3L7.700 1v12l-4-3.700h-3zM12 4.200l6 6M18 4.200l-6 6" s={1.300} c="#222" />
          </TrayItem>
          <TrayItem $before={11}>
            <svg width="20" height="13" viewBox="0 0 20 13" fill="none">
              <rect x=".7" y=".7" width="16.300" height="11.600" rx="2.600" stroke="#222" strokeWidth="1.400" />
              <rect x="3" y="3" width="11.500" height="7" rx="1" fill="#111" />
              <path d="M18.700 4.500v4" stroke="#222" strokeWidth="2" />
            </svg>
          </TrayItem>
          <TrayItem $before={20} $up={1}>
            <TwoLines $align="right">
              <Line $spacing={-0.2}>15:28</Line>
              <Line $spacing={0.23}>25-04-2024</Line>
            </TwoLines>
          </TrayItem>
          <TrayItem $before={11} $up={1}>
            <svg width="16" height="19" viewBox="0 0 16 19" fill="#003e92">
              <path d="M8 0a6 6 0 0 1 6 6v5.500l2 3.800v.7H0v-.7l2-3.800V6a6 6 0 0 1 6-6zM5 16.700h6a3 3 0 0 1-6 0z" />
            </svg>
          </TrayItem>
          <TrayItem $before={22}>
            <Copilot />
          </TrayItem>
        </Tray>
      </Taskbar>
    </Window>
  );
}
